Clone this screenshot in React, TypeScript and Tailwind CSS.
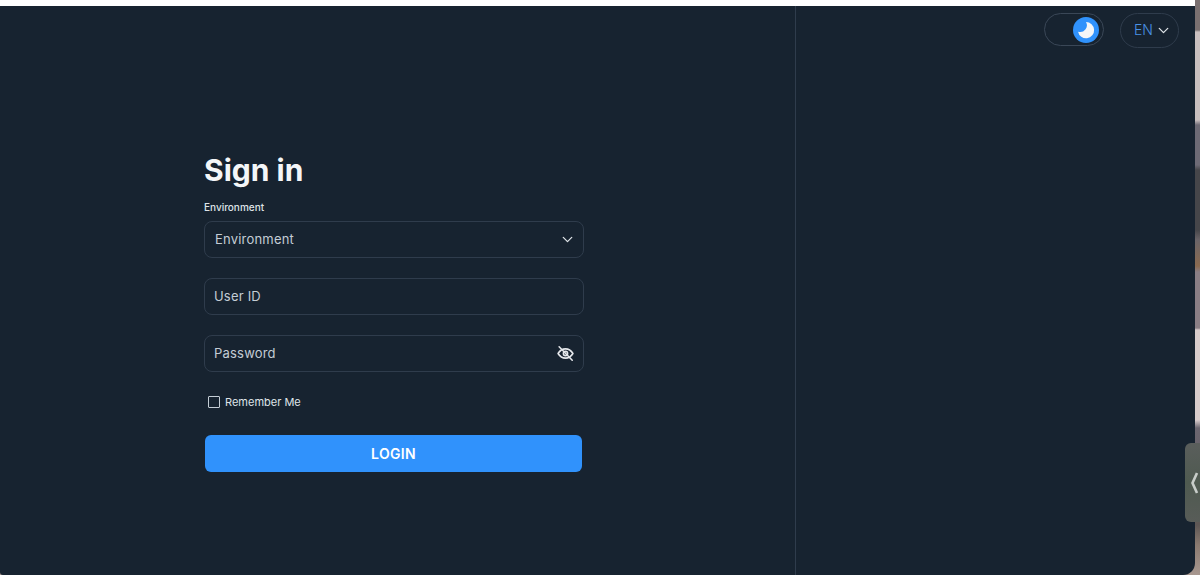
import { ChevronDown } from "lucide-react";

function EyeOff() {
  return (
    <svg width="17" height="17" viewBox="0 0 24 24" fill="none" stroke="#e5e7eb" strokeWidth="2.2" strokeLinecap="round" strokeLinejoin="round">
      <path d="M1.5 12S5.5 5.5 12 5.5 22.5 12 22.5 12 18.5 18.5 12 18.5 1.5 12 1.5 12Z" />
      <circle cx="12" cy="12" r="3" />
      <path d="M3 2.5l18.5 19" />
    </svg>
  );
}

export default function App() {
  return (
    <div className="w-[1200px] h-[575px] overflow-hidden relative bg-[linear-gradient(to_bottom,#7a7070_0,#7a7070_30px,#c9bfbf_32px,#c9bfbf_120px,#6d6a75_125px,#6d6a75_165px,#46464a_170px,#46464a_230px,#6a6468_240px,#8a6a50_266px,#8a7e85_272px,#8a7e85_328px,#d8cccc_330px,#d8cccc_420px,#6b6670_428px,#5e5755_525px,#8a7a70_545px,#a89890_575px)] font-['Inter',sans-serif]">
      <div className="h-[6px] w-[1195px] bg-white" />
      <div className="w-[1195px] h-[569px] bg-[#172330] rounded-br-[12px] rounded-bl-[3px] flex">
        <div className="w-[796px] h-full border-r border-[#2f3c4c] flex flex-col pl-[204px] pt-[142px]">
          <h1 className="text-[30px] leading-[44px] font-bold text-[#f4f6f8]">Sign in</h1>
          <label className="text-[10px] leading-[14px] font-medium text-[#dfe3e8] mt-[8px]">Environment</label>
          <div className="w-[380px] h-[37px] mt-[7px] border border-[#2f3c4c] rounded-[8px] flex items-center justify-between pl-[10px] pr-[7px] text-[13px] text-[#c4cdd5] tracking-[0.2px]">
            <span>Environment</span>
            <ChevronDown size={17} color="#dfe3e8" strokeWidth={1.8} />
          </div>
          <div className="w-[380px] h-[37px] mt-[20px] border border-[#2f3c4c] rounded-[8px] flex items-center pl-[9px] text-[13px] text-[#c4cdd5] tracking-[0.2px]">
            User ID
          </div>
          <div className="w-[380px] h-[37px] mt-[20px] border border-[#2f3c4c] rounded-[8px] flex items-center justify-between pl-[9px] pr-[9px] text-[13px] text-[#c4cdd5] tracking-[0.2px]">
            <span>Password</span>
            <EyeOff />
          </div>
          <div className="flex items-center mt-[23px] ml-[4px] h-[14px] gap-[5px]">
            <div className="w-[12px] h-[12px] border-[1.5px] border-[#c4cdd5] rounded-[1px]" />
            <span className="text-[11px] text-[#dfe3e8]">Remember Me</span>
          </div>
          <button className="w-[377px] h-[37px] ml-[1px] mt-[26px] rounded-[6px] bg-[#3092fc] text-white text-[14px] font-semibold tracking-[0.3px]">
            LOGIN
          </button>
        </div>
        <div className="flex-1 flex justify-end items-start gap-[16px] pt-[7px] pr-[16px]">
          <div className="w-[60px] h-[33px] border border-[#3a4757] rounded-full flex items-center justify-end pr-[4px]">
            <div className="w-[26px] h-[26px] rounded-full bg-[#3092fc] flex items-center justify-center">
              <svg width="20" height="20" viewBox="0 0 24 24" fill="#f4f6f8">
                <path d="M12 2.5a9.7 9.7 0 1 1-9.5 11.5A8 8 0 0 0 12 2.5Z" />
              </svg>
            </div>
          </div>
          <div className="w-[59px] h-[35px] border border-[#2f3c4c] rounded-full flex items-center pl-[13px] pb-[3px] text-[14px] font-light text-[#4a93e6]">
            EN
            <ChevronDown size={17} color="#dfe3e8" strokeWidth={1.8} className="ml-[2px] mt-[3px]" />
          </div>
        </div>
      </div>
      <div className="absolute right-0 top-[443px] w-[15px] h-[79px] rounded-l-[6px] bg-[linear-gradient(to_bottom,#5a5e5c,#4f5a50,#585c58)] flex items-center pl-[5px]">
        <svg width="9" height="24" viewBox="0 0 9 24" fill="none" stroke="#c8cdc9" strokeWidth="2.6">
          <path d="M7 2 2.5 12 7 22" />
        </svg>
      </div>
    </div>
  );
}
